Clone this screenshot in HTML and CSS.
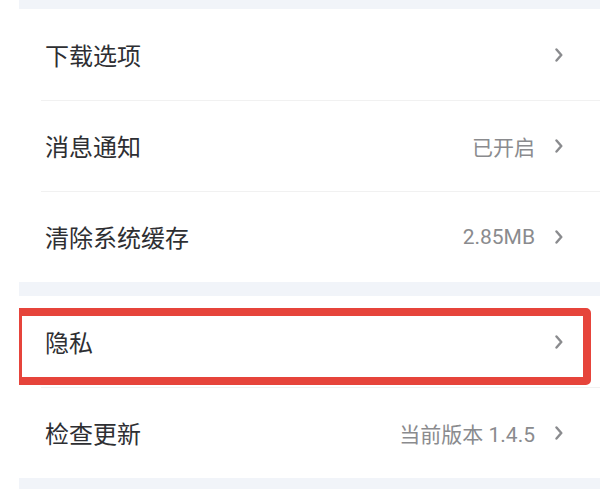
FILE: index.html
```html
<!DOCTYPE html>
<html lang="zh-CN">
<head>
    <meta charset="UTF-8">
    <meta name="viewport" content="width=device-width, initial-scale=1.0">
    <title>设置</title>
    <link rel="stylesheet" href="styles.css">
</head>
<body>
    <div class="page">
        <div class="group">
            <div class="row">
                <span class="label">下载选项</span>
                <span class="value"></span>
                <svg class="arrow" width="8" height="14" viewBox="0 0 8 14"><path d="M1.5 1.5 L6.3 7 L1.5 12.5" /></svg>
            </div>
            <div class="row">
                <span class="label">消息通知</span>
                <span class="value">已开启</span>
                <svg class="arrow" width="8" height="14" viewBox="0 0 8 14"><path d="M1.5 1.5 L6.3 7 L1.5 12.5" /></svg>
            </div>
            <div class="row">
                <span class="label">清除系统缓存</span>
                <span class="value">2.85MB</span>
                <svg class="arrow" width="8" height="14" viewBox="0 0 8 14"><path d="M1.5 1.5 L6.3 7 L1.5 12.5" /></svg>
            </div>
        </div>

        <div class="group">
            <div class="row marked">
                <span class="label">隐私</span>
                <span class="value"></span>
                <svg class="arrow" width="8" height="14" viewBox="0 0 8 14"><path d="M1.5 1.5 L6.3 7 L1.5 12.5" /></svg>
                <!-- 红框标注 -->
                <span class="highlight"></span>
            </div>
            <div class="row">
                <span class="label">检查更新</span>
                <span class="value">当前版本 1.4.5</span>
                <svg class="arrow" width="8" height="14" viewBox="0 0 8 14"><path d="M1.5 1.5 L6.3 7 L1.5 12.5" /></svg>
            </div>
        </div>
    </div>
</body>
</html>
```

FILE: styles.css
```css
body {
    margin: 0;
    padding: 0;
    background-color: #fff;
    font-family: Roboto, "Noto Sans CJK SC", sans-serif;
}

.page {
    margin-left: 19px;
    padding-top: 9px;
    min-height: 100vh;
    background-color: #f1f4f9;
    box-sizing: border-box;
}

.group {
    background-color: #fff;
    margin-bottom: 14px;
}

.row {
    position: relative;
    display: flex;
    align-items: center;
    height: 91px;
    padding: 0 37px 0 26px;
    box-sizing: border-box;
}

/* 分隔线从文字处开始 */
.row + .row::before {
    content: "";
    position: absolute;
    top: 0;
    left: 22px;
    right: 0;
    border-top: 1px solid #f1f1f1;
}

.label {
    flex: 1;
    font-size: 24px;
    color: #2e2f33;
}

.value {
    font-size: 21px;
    color: #8a8b8e;
    margin-right: 20px;
}

.arrow path {
    fill: none;
    stroke: #8a8b8e;
    stroke-width: 2.4;
    stroke-linecap: round;
    stroke-linejoin: round;
}

/* 红色标注框 */
.highlight {
    position: absolute;
    left: 0;
    top: 12px;
    right: 9px;
    bottom: 2px;
    border: 8px solid #e6443b;
    border-left-width: 3px;
    border-radius: 0 5px 5px 0;
    pointer-events: none;
}
```
